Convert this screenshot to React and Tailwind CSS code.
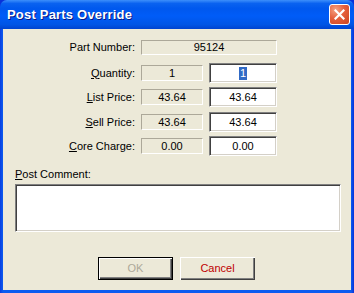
const font = { fontFamily: '"Liberation Sans", Arial, sans-serif' };

const Label = ({ pre, u, post }) => (
  <div className="w-[138px] pr-[6px] text-right text-[11px] text-black leading-none">
    {pre}
    {u && <span className="underline underline-offset-[1px]">{u}</span>}
    {post}
  </div>
);

const ReadBox = ({ value, wide }) => (
  <div
    className={`${wide ? 'w-[136px] h-[15px]' : 'w-[62px] h-[16px]'} flex items-center justify-center border border-t-[#aca899] border-l-[#aca899] border-b-white border-r-white text-[11px] leading-none text-black`}
  >
    {value}
  </div>
);

const InputBox = ({ value, selected }) => (
  <div className="ml-[6px] w-[68px] h-[20px] flex items-center justify-center bg-white border border-t-[#808080] border-l-[#808080] border-b-white border-r-white shadow-[inset_1px_1px_0_#404040,inset_-1px_-1px_0_#d4d0c8] text-[11px] leading-none text-black">
    {selected ? (
      <span className="bg-[#316ac5] text-white px-[1px] leading-[13px]">{value}</span>
    ) : (
      value
    )}
  </div>
);

const Row = ({ label, ro, val, selected, className }) => (
  <div className={`flex items-center h-[20px] ${className}`}>
    {label}
    <ReadBox value={ro} />
    <InputBox value={val} selected={selected} />
  </div>
);

const App = () => {
  return (
    <div className="w-[354px] h-[293px] flex flex-col bg-[#0831d9]" style={font}>
      <div className="h-[29px] shrink-0 flex items-center justify-between pl-[7px] pr-[4px] rounded-t-[7px] bg-[linear-gradient(180deg,#3d8ffb_0%,#0a62f0_12%,#0058ee_30%,#005cf8_55%,#0055e5_85%,#0043cf_100%)]">
        <span className="text-white font-bold text-[13px] [text-shadow:1px_1px_0_#0a1883] tracking-[0.2px]">
          Post Parts Override
        </span>
        <div className="w-[21px] h-[21px] rounded-[3px] border border-white bg-[radial-gradient(circle_at_30%_25%,#f5a283_0%,#e5603d_45%,#cc4420_100%)] flex items-center justify-center">
          <svg width="11" height="11" viewBox="0 0 11 11">
            <path d="M1.5 1.5 L9.5 9.5 M9.5 1.5 L1.5 9.5" stroke="white" strokeWidth="2.2" strokeLinecap="square" />
          </svg>
        </div>
      </div>
      <div className="flex-1 flex flex-col px-[3px] pb-[3px] bg-[linear-gradient(90deg,#0a3ee0_0px,#0c5cf0_3px,#0c5cf0_351px,#0831d9_354px)]">
        <div className="flex-1 flex flex-col bg-[#ece9d8]">
          <div className="flex items-center mt-[11px] h-[15px]">
            <Label pre="Part Number:" />
            <ReadBox value="95124" wide />
          </div>
          <Row
            className="mt-[8px]"
            label={<Label u="Q" post="uantity:" />}
            ro="1"
            val="1"
            selected
          />
          <Row className="mt-[4px]" label={<Label u="L" post="ist Price:" />} ro="43.64" val="43.64" />
          <Row className="mt-[5px]" label={<Label u="S" post="ell Price:" />} ro="43.64" val="43.64" />
          <Row className="mt-[4px]" label={<Label u="C" post="ore Charge:" />} ro="0.00" val="0.00" />

          <div className="ml-[12px] mt-[13px] text-[11px] leading-none text-black">
            <span className="underline underline-offset-[1px]">P</span>ost Comment:
          </div>
          <div className="ml-[12px] mt-[4px] w-[326px] h-[48px] bg-white border border-t-[#808080] border-l-[#808080] border-b-white border-r-white shadow-[inset_1px_1px_0_#404040,inset_-1px_-1px_0_#d4d0c8]" />

          <div className="flex ml-[95px] mt-[25px] gap-[7px]">
            <button className="w-[75px] h-[23px] border border-black bg-[#ece9d8] text-[11px] text-[#aca899] shadow-[inset_1px_1px_0_#fff,inset_-1px_-1px_0_#404040,inset_-2px_-2px_0_#808080]">
              OK
            </button>
            <button className="w-[75px] h-[23px] bg-[#ece9d8] text-[11px] text-[#c00000] shadow-[inset_1px_1px_0_#fff,inset_-1px_-1px_0_#404040,inset_-2px_-2px_0_#808080]">
              Cancel
            </button>
          </div>
        </div>
      </div>
    </div>
  );
};

export default App;
